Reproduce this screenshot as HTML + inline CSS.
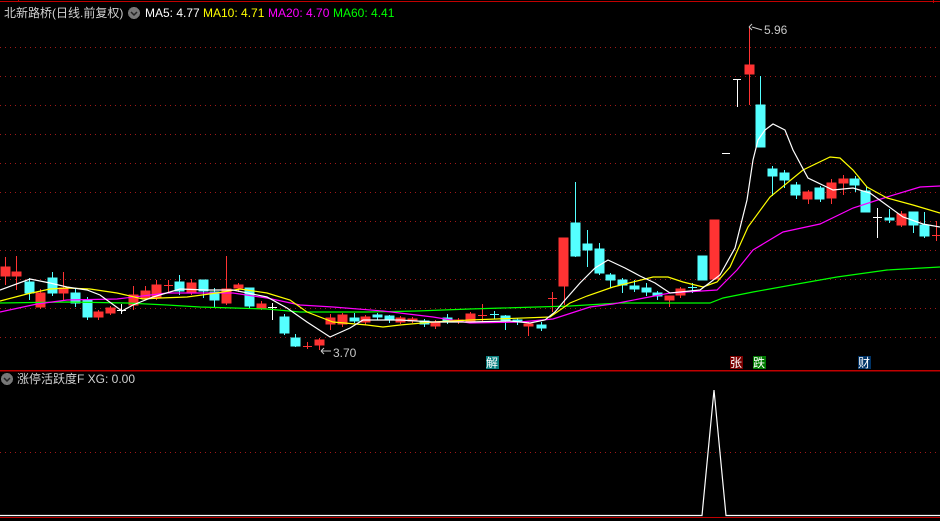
<!DOCTYPE html>
<html><head><meta charset="utf-8"><style>
html,body{margin:0;padding:0;background:#000;width:940px;height:521px;overflow:hidden}
svg{display:block}
text{font-family:"Liberation Sans","Noto Sans CJK SC",sans-serif;font-size:12px}
</style></head><body>
<svg width="940" height="521" viewBox="0 0 940 521" xmlns="http://www.w3.org/2000/svg" shape-rendering="crispEdges">
<rect width="940" height="521" fill="#000"/>
<line x1="0" y1="1.5" x2="940" y2="1.5" stroke="#c00000"/>
<line x1="18.5" y1="0" x2="18.5" y2="2" stroke="#c00000"/>
<line x1="933.5" y1="0" x2="933.5" y2="3" stroke="#c00000"/>
<g stroke="#a01818" stroke-dasharray="1,4">
<line x1="0" y1="47.5" x2="940" y2="47.5"/><line x1="0" y1="76.5" x2="940" y2="76.5"/>
<line x1="0" y1="105.5" x2="940" y2="105.5"/><line x1="0" y1="134.5" x2="940" y2="134.5"/>
<line x1="0" y1="163.5" x2="940" y2="163.5"/><line x1="0" y1="192.5" x2="940" y2="192.5"/>
<line x1="0" y1="221.5" x2="940" y2="221.5"/><line x1="0" y1="250.5" x2="940" y2="250.5"/>
<line x1="0" y1="279.5" x2="940" y2="279.5"/><line x1="0" y1="308.5" x2="940" y2="308.5"/>
<line x1="0" y1="337.5" x2="940" y2="337.5"/><line x1="0" y1="452.5" x2="940" y2="452.5"/>
</g>
<line x1="0" y1="370.5" x2="940" y2="370.5" stroke="#c00000" stroke-width="1.5"/>
<line x1="0" y1="517.5" x2="940" y2="517.5" stroke="#c00000"/>

<!-- candles -->
<g id="c">
<!-- red -->
<g fill="#ff3333" stroke="#ff3333">
<line x1="5.5" y1="257" x2="5.5" y2="285"/><rect x="1" y="267" width="9" height="9"/>
<line x1="16.5" y1="256" x2="16.5" y2="290"/><rect x="12" y="272" width="9" height="4"/>
<line x1="40.5" y1="289" x2="40.5" y2="309"/><rect x="36" y="293" width="9" height="14"/>
<line x1="63.5" y1="272" x2="63.5" y2="300"/><rect x="59" y="288" width="9" height="5"/>
<line x1="98.5" y1="310" x2="98.5" y2="320"/><rect x="94" y="312" width="9" height="5"/>
<line x1="110.5" y1="306" x2="110.5" y2="315"/><rect x="106" y="308" width="9" height="5"/>
<line x1="133.5" y1="286" x2="133.5" y2="310"/><rect x="129" y="295" width="9" height="10"/>
<line x1="145.5" y1="286" x2="145.5" y2="300"/><rect x="141" y="291" width="9" height="7"/>
<line x1="156.5" y1="280" x2="156.5" y2="300"/><rect x="152" y="285" width="9" height="13"/>
<line x1="168.5" y1="280" x2="168.5" y2="292"/><line x1="164" y1="285.5" x2="173" y2="285.5"/>
<line x1="191.5" y1="279" x2="191.5" y2="295"/><rect x="187" y="283" width="9" height="9"/>
<line x1="226.5" y1="256" x2="226.5" y2="305"/><rect x="222" y="289" width="9" height="14"/>
<line x1="238.5" y1="283" x2="238.5" y2="292"/><rect x="234" y="285" width="9" height="3"/>
<line x1="261.5" y1="301" x2="261.5" y2="310"/><rect x="257" y="304" width="9" height="4"/>
<line x1="307.5" y1="342" x2="307.5" y2="349"/><line x1="303" y1="346.5" x2="312" y2="346.5"/>
<line x1="319.5" y1="338" x2="319.5" y2="350"/><rect x="315" y="340" width="9" height="5"/>
<line x1="330.5" y1="314" x2="330.5" y2="330"/><rect x="326" y="318" width="9" height="6"/>
<line x1="342.5" y1="313" x2="342.5" y2="327"/><rect x="338" y="315" width="9" height="9"/>
<line x1="365.5" y1="315" x2="365.5" y2="325"/><rect x="361" y="317" width="9" height="5"/>
<line x1="400.5" y1="316" x2="400.5" y2="324"/><rect x="396" y="318" width="9" height="4"/>
<line x1="412.5" y1="317" x2="412.5" y2="323"/><rect x="408" y="319" width="9" height="2"/>
<line x1="435.5" y1="320" x2="435.5" y2="329"/><rect x="431" y="322" width="9" height="4"/>
<line x1="458.5" y1="318" x2="458.5" y2="324"/><rect x="454" y="320" width="9" height="2"/>
<line x1="470.5" y1="312" x2="470.5" y2="323"/><rect x="466" y="314" width="9" height="7"/>
<line x1="482.5" y1="304" x2="482.5" y2="322"/><line x1="478" y1="315.5" x2="487" y2="315.5"/>
<line x1="528.5" y1="322" x2="528.5" y2="336"/><rect x="524" y="324" width="9" height="2"/>
<line x1="552.5" y1="292" x2="552.5" y2="312"/><line x1="548" y1="298.5" x2="557" y2="298.5"/>
<line x1="564.5" y1="286" x2="564.5" y2="305"/><rect x="559" y="238" width="9" height="48"/>
<line x1="669.5" y1="296" x2="669.5" y2="307"/><rect x="665" y="296" width="9" height="4"/>
<line x1="680.5" y1="287" x2="680.5" y2="298"/><rect x="676" y="289" width="9" height="6"/>
<rect x="710" y="220" width="9" height="59"/>
<line x1="749.5" y1="27" x2="749.5" y2="105"/><rect x="745" y="65" width="9" height="9"/>
<line x1="808.5" y1="190" x2="808.5" y2="204"/><rect x="803" y="192" width="9" height="7"/>
<line x1="831.5" y1="179" x2="831.5" y2="204"/><rect x="827" y="183" width="9" height="15"/>
<line x1="843.5" y1="175" x2="843.5" y2="195"/><rect x="839" y="179" width="9" height="4"/>
<line x1="901.5" y1="211" x2="901.5" y2="227"/><rect x="897" y="214" width="9" height="11"/>
<line x1="936.5" y1="221" x2="936.5" y2="241"/><line x1="932" y1="235.5" x2="940" y2="235.5"/>
</g>
<!-- cyan -->
<g fill="#54ffff" stroke="#54ffff">
<line x1="29.5" y1="278" x2="29.5" y2="300"/><rect x="25" y="282" width="9" height="11"/>
<line x1="52.5" y1="272" x2="52.5" y2="296"/><rect x="48" y="278" width="9" height="15"/>
<line x1="75.5" y1="289" x2="75.5" y2="307"/><rect x="71" y="293" width="9" height="10"/>
<line x1="87.5" y1="297" x2="87.5" y2="320"/><rect x="83" y="300" width="9" height="17"/>
<line x1="179.5" y1="275" x2="179.5" y2="295"/><rect x="175" y="282" width="9" height="9"/>
<line x1="203.5" y1="280" x2="203.5" y2="298"/><rect x="199" y="280" width="9" height="11"/>
<line x1="214.5" y1="288" x2="214.5" y2="308"/><rect x="210" y="292" width="9" height="8"/>
<line x1="249.5" y1="288" x2="249.5" y2="308"/><rect x="245" y="288" width="9" height="18"/>
<line x1="284.5" y1="314" x2="284.5" y2="335"/><rect x="280" y="317" width="9" height="16"/>
<line x1="295.5" y1="334" x2="295.5" y2="347"/><rect x="291" y="338" width="9" height="8"/>
<line x1="354.5" y1="313" x2="354.5" y2="323"/><rect x="350" y="318" width="9" height="3"/>
<line x1="377.5" y1="313" x2="377.5" y2="320"/><rect x="373" y="315" width="9" height="2"/>
<line x1="389.5" y1="315" x2="389.5" y2="323"/><rect x="385" y="316" width="9" height="4"/>
<line x1="424.5" y1="319" x2="424.5" y2="327"/><rect x="420" y="321" width="9" height="3"/>
<line x1="447.5" y1="314" x2="447.5" y2="324"/><rect x="443" y="318" width="9" height="4"/>
<line x1="494.5" y1="311" x2="494.5" y2="319"/><line x1="490" y1="314.5" x2="499" y2="314.5"/>
<line x1="505.5" y1="315" x2="505.5" y2="330"/><rect x="501" y="316" width="9" height="4"/>
<line x1="517.5" y1="318" x2="517.5" y2="325"/><rect x="513" y="320" width="9" height="2"/>
<line x1="541.5" y1="322" x2="541.5" y2="331"/><rect x="537" y="325" width="9" height="3"/>
<line x1="575.5" y1="182" x2="575.5" y2="257"/><rect x="571" y="223" width="9" height="33"/>
<line x1="587.5" y1="230" x2="587.5" y2="267"/><rect x="583" y="244" width="9" height="6"/>
<line x1="599.5" y1="243" x2="599.5" y2="275"/><rect x="595" y="249" width="9" height="24"/>
<line x1="610.5" y1="273" x2="610.5" y2="288"/><rect x="606" y="275" width="9" height="5"/>
<line x1="622.5" y1="278" x2="622.5" y2="293"/><rect x="618" y="280" width="9" height="5"/>
<line x1="634.5" y1="280" x2="634.5" y2="292"/><rect x="630" y="286" width="9" height="3"/>
<line x1="646.5" y1="283" x2="646.5" y2="296"/><rect x="642" y="288" width="9" height="4"/>
<line x1="657.5" y1="291" x2="657.5" y2="300"/><rect x="653" y="293" width="9" height="3"/>
<line x1="692.5" y1="283" x2="692.5" y2="293"/><line x1="688" y1="287.5" x2="697" y2="287.5"/>
<rect x="698" y="256" width="9" height="24"/>
<line x1="760.5" y1="76" x2="760.5" y2="147"/><rect x="756" y="105" width="9" height="42"/>
<line x1="772.5" y1="166" x2="772.5" y2="196"/><rect x="768" y="169" width="9" height="7"/>
<line x1="784.5" y1="170" x2="784.5" y2="188"/><rect x="780" y="173" width="9" height="7"/>
<line x1="796.5" y1="182" x2="796.5" y2="199"/><rect x="791" y="185" width="9" height="10"/>
<line x1="820.5" y1="186" x2="820.5" y2="202"/><rect x="815" y="188" width="9" height="11"/>
<line x1="855.5" y1="176" x2="855.5" y2="192"/><rect x="850" y="179" width="9" height="6"/>
<line x1="866.5" y1="187" x2="866.5" y2="212"/><rect x="861" y="191" width="9" height="21"/>
<line x1="889.5" y1="209" x2="889.5" y2="223"/><rect x="885" y="218" width="9" height="2"/>
<line x1="913.5" y1="212" x2="913.5" y2="233"/><rect x="909" y="212" width="9" height="13"/>
<line x1="924.5" y1="212" x2="924.5" y2="238"/><rect x="920" y="225" width="9" height="11"/>
</g>
<!-- white dojis -->
<g stroke="#fff">
<line x1="121.5" y1="304" x2="121.5" y2="314"/><line x1="117" y1="310.5" x2="126" y2="310.5"/>
<line x1="272.5" y1="303" x2="272.5" y2="320"/><line x1="268" y1="307.5" x2="277" y2="307.5"/>
<line x1="737.5" y1="79" x2="737.5" y2="107"/><line x1="733" y1="79.5" x2="741" y2="79.5"/>
<line x1="722" y1="153.5" x2="730" y2="153.5"/>
<line x1="877.5" y1="208" x2="877.5" y2="238"/><line x1="873" y1="217.5" x2="882" y2="217.5"/>
</g>
</g>

<!-- MA lines -->
<g fill="none" stroke-width="1.2" shape-rendering="auto">
<polyline stroke="#00ff00" points="0,303 67,302 127,303 167,305 200,307 267,309 300,312 367,312 417,311 470,309 503,308 570,306 620,303 697,303 710,303 723,298 753,292 803,283 837,277 887,270 940,267"/>
<polyline stroke="#ff00ff" points="0,312 37,304 67,300 117,299 167,293 217,293 233,293 267,298 300,305 333,307 383,311 433,317 470,323 520,322 553,319 590,307 613,304 670,293 717,290 737,270 753,250 783,232 820,224 853,208 887,197 920,187 940,186"/>
<polyline stroke="#ffff00" points="0,301 27,294 50,289 67,288 90,289 117,293 143,299 160,298 187,297 217,293 240,289 267,293 290,300 307,312 333,322 367,325 383,327 400,325 433,322 470,320 550,317 570,303 587,296 613,287 653,277 668,277 683,282 703,287 717,282 730,267 748,227 770,197 803,170 830,157 840,158 853,170 867,187 887,198 913,205 940,213"/>
<polyline stroke="#ffffff" points="0,290 30,279 50,283 67,287 87,290 100,295 122,311 133,305 153,297 180,289 207,290 233,290 267,297 287,308 307,322 330,337 350,328 363,320 400,320 433,322 470,322 510,321 530,323 545,320 555,312 565,300 580,283 595,268 608,260 625,268 640,276 655,283 670,293 700,290 720,275 735,248 747,200 753,160 758,140 765,130 773,124 785,130 793,150 808,178 833,190 853,188 870,193 903,217 923,224 940,227"/>
</g>

<!-- price labels -->
<g fill="#c8c8c8">
<text x="333" y="357">3.70</text>
<text x="764" y="34">5.96</text>
</g>
<g stroke="#c8c8c8" fill="none" shape-rendering="auto">
<path d="M331,351 L321,351 M321,351 l3,-3 M321,351 l3,3"/>
<path d="M762,30 L752,27 M749,27 l3,-3 M749,27 l3,3"/>
</g>

<!-- marker labels -->
<rect x="486" y="356" width="13" height="13" fill="#0a7f7f"/>
<text x="486" y="367" fill="#fff">解</text>
<rect x="730" y="356" width="13" height="13" fill="#7a0000"/>
<text x="730" y="367" fill="#fff">张</text>
<rect x="753" y="356" width="13" height="13" fill="#007a00"/>
<text x="753" y="367" fill="#fff">跌</text>
<rect x="858" y="356" width="13" height="13" fill="#003366"/>
<text x="858" y="367" fill="#fff">财</text>

<!-- header -->
<text x="4" y="17" fill="#d0d0d0">北新路桥(日线.前复权)</text>
<circle cx="134" cy="13" r="6" fill="#777"/>
<path d="M131,12 l3,3 l3,-3" stroke="#222" stroke-width="1.5" fill="none" shape-rendering="auto"/>
<text x="145" y="17" fill="#fff">MA5: 4.77</text>
<text x="203" y="17" fill="#ffff00">MA10: 4.71</text>
<text x="268" y="17" fill="#ff00ff">MA20: 4.70</text>
<text x="333" y="17" fill="#00ff00">MA60: 4.41</text>

<!-- lower panel -->
<circle cx="7" cy="379" r="6" fill="#777"/>
<path d="M4,378 l3,3 l3,-3" stroke="#222" stroke-width="1.5" fill="none" shape-rendering="auto"/>
<text x="17" y="383" fill="#d0d0d0">涨停活跃度F XG: 0.00</text>
<polyline points="0,515.5 702,515.5 714,390 726,515.5 940,515.5" fill="none" stroke="#fff" stroke-width="1.2" shape-rendering="auto"/>
</svg>
</body></html>
